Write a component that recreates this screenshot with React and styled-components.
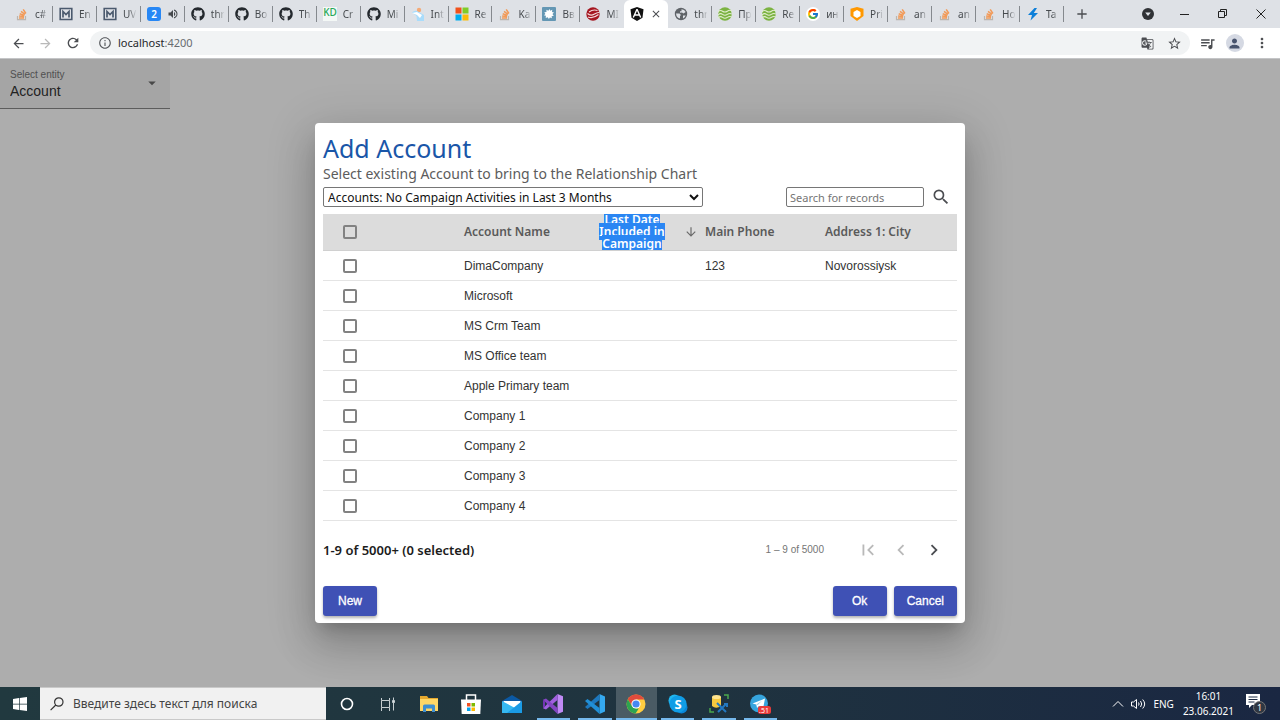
import { useState } from "react";
import styled, { createGlobalStyle, css } from "styled-components";
import { FaGithub } from "react-icons/fa";
import { FcGoogle } from "react-icons/fc";
import {
  MdAdd,
  MdArrowBack,
  MdArrowDownward,
  MdArrowDropDown,
  MdArrowForward,
  MdChevronLeft,
  MdChevronRight,
  MdClose,
  MdFirstPage,
  MdGTranslate,
  MdInfoOutline,
  MdMoreVert,
  MdPerson,
  MdQueueMusic,
  MdRefresh,
  MdSearch,
  MdStarBorder,
  MdVolumeUp,
} from "react-icons/md";

const companies = [
  { name: "DimaCompany", phone: "123", city: "Novorossiysk" },
  { name: "Microsoft" },
  { name: "MS Crm Team" },
  { name: "MS Office team" },
  { name: "Apple Primary team" },
  { name: "Company 1" },
  { name: "Company 2" },
  { name: "Company 3" },
  { name: "Company 4" },
];

const tabs = [
  { icon: <StackIcon />, title: "c#" },
  { icon: <MIcon />, title: "En" },
  { icon: <MIcon />, title: "UV" },
  { icon: <TwoIcon />, sound: true },
  { icon: <FaGithub color="#24292e" />, title: "thr" },
  { icon: <FaGithub color="#24292e" />, title: "Bo" },
  { icon: <FaGithub color="#24292e" />, title: "Th" },
  { icon: <KdIcon />, title: "Cr" },
  { icon: <FaGithub color="#24292e" />, title: "Mi" },
  { icon: <CloudIcon />, title: "Int" },
  { icon: <MicrosoftIcon />, title: "Re" },
  { icon: <StackIcon />, title: "Ka" },
  { icon: <SplashIcon />, title: "Вв" },
  { icon: <RedIcon />, title: "MI" },
  { icon: <AngularIcon />, active: true },
  { icon: <GlobeIcon />, title: "thr" },
  { icon: <WavesIcon />, title: "Пр" },
  { icon: <WavesIcon />, title: "Re" },
  { icon: <GoogleIcon />, title: "ин" },
  { icon: <ShieldIcon />, title: "Pri" },
  { icon: <StackIcon />, title: "an" },
  { icon: <StackIcon />, title: "an" },
  { icon: <StackIcon />, title: "Ho" },
  { icon: <BoltIcon />, title: "Ta" },
];

const apps = [
  { label: "Cortana", icon: <CortanaIcon /> },
  { label: "Task view", icon: <TaskViewIcon /> },
  { label: "Explorer", icon: <FolderIcon /> },
  { label: "Store", icon: <StoreIcon /> },
  { label: "Mail", icon: <MailIcon /> },
  { label: "Visual Studio", icon: <StudioIcon />, running: true },
  { label: "Code", icon: <CodeIcon />, running: true },
  { label: "Chrome", icon: <ChromeIcon />, running: true, focused: true },
  { label: "Skype", icon: <SkypeIcon />, running: true },
  { label: "SQL tools", icon: <DatabaseIcon />, running: true },
  { label: "Telegram", icon: <TelegramIcon />, running: true },
];

export default function App() {
  return (
    <>
      <GlobalStyle />
      <Screen>
        <TabBar />
        <AddressBar />
        <Page>
          <EntityField />
          <Backdrop>
            <AddAccountDialog />
          </Backdrop>
        </Page>
        <Taskbar />
      </Screen>
    </>
  );
}

function TabBar() {
  return (
    <TabStrip>
      <TabList>
        {tabs.map((tab, index) => (
          <Tab key={index} $active={tab.active} $divided={!tab.active && index !== 13}>
            {tab.icon}
            {tab.title && <TabTitle>{tab.title}</TabTitle>}
            {tab.sound && <MdVolumeUp size={12} />}
            {tab.active && (
              <IconButton aria-label="Close tab" $size={12}>
                <MdClose size={12} />
              </IconButton>
            )}
          </Tab>
        ))}
      </TabList>
      <IconButton aria-label="New tab" $size={36}>
        <MdAdd size={16} />
      </IconButton>
      <WindowButtons>
        <IconButton aria-label="Search tabs" $size={36}>
          <svg width="12" height="12" viewBox="0 0 12 12">
            <circle cx="6" cy="6" r="6" fill="#303236" />
            <path d="M3.2 4.5h5.6L6 8z" fill="#dee1e6" />
          </svg>
        </IconButton>
        <IconButton aria-label="Minimize" $size={38}>
          <svg width="10" height="10" viewBox="0 0 10 10">
            <path d="M0 5.5h9" stroke="#222" />
          </svg>
        </IconButton>
        <IconButton aria-label="Restore" $size={38}>
          <svg width="10" height="10" viewBox="0 0 10 10" fill="none" stroke="#222">
            <path d="M.5 2.5h6v6h-6zM2.5 2.5v-2h6v6h-2" />
          </svg>
        </IconButton>
        <IconButton aria-label="Close" $size={38}>
          <svg width="10" height="10" viewBox="0 0 10 10">
            <path d="M.5.5l9 9M9.5.5l-9 9" stroke="#222" />
          </svg>
        </IconButton>
      </WindowButtons>
    </TabStrip>
  );
}

function AddressBar() {
  return (
    <Toolbar>
      <IconButton aria-label="Back" $size={27}>
        <MdArrowBack size={15} />
      </IconButton>
      <IconButton aria-label="Forward" $size={27} $muted>
        <MdArrowForward size={15} />
      </IconButton>
      <IconButton aria-label="Reload" $size={27}>
        <MdRefresh size={16} />
      </IconButton>
      <Omnibox>
        <MdInfoOutline size={14} />
        <Address>
          localhost<span>:4200</span>
        </Address>
        <IconButton aria-label="Translate" $size={27}>
          <MdGTranslate size={13} />
        </IconButton>
        <IconButton aria-label="Bookmark" $size={27}>
          <MdStarBorder size={15} />
        </IconButton>
      </Omnibox>
      <IconButton aria-label="Media" $size={27}>
        <MdQueueMusic size={17} />
      </IconButton>
      <IconButton aria-label="Profile" $size={27}>
        <Avatar>
          <MdPerson size={15} />
        </Avatar>
      </IconButton>
      <IconButton aria-label="Menu" $size={27}>
        <MdMoreVert size={16} />
      </IconButton>
    </Toolbar>
  );
}

function EntityField() {
  return (
    <Field>
      <FieldText>
        <label htmlFor="entity">Select entity</label>
        <select id="entity" defaultValue="Account">
          <option>Account</option>
        </select>
      </FieldText>
      <MdArrowDropDown size={18} />
    </Field>
  );
}

function AddAccountDialog() {
  const [selected, setSelected] = useState([]);

  function toggle(name) {
    if (selected.includes(name)) setSelected(selected.filter((item) => item !== name));
    else setSelected([...selected, name]);
  }

  function toggleAll() {
    setSelected(selected.length === companies.length ? [] : companies.map((company) => company.name));
  }

  return (
    <Dialog role="dialog" aria-labelledby="dialog-title">
      <h1 id="dialog-title">Add Account</h1>
      <Subtitle>Select existing Account to bring to the Relationship Chart</Subtitle>
      <Filters>
        <ViewSelect aria-label="View" defaultValue="campaign">
          <option value="campaign">Accounts: No Campaign Activities in Last 3 Months</option>
        </ViewSelect>
        <SearchForm onSubmit={(event) => event.preventDefault()}>
          <SearchInput aria-label="Search for records" placeholder="Search for records" />
          <IconButton type="submit" aria-label="Search" $size={33}>
            <MdSearch size={20} />
          </IconButton>
        </SearchForm>
      </Filters>
      <Table>
        <colgroup>
          <col width="141" />
          <col width="120" />
          <col width="121" />
          <col width="120" />
          <col />
        </colgroup>
        <thead>
          <tr>
            <th>
              <Checkbox
                aria-label="Select all"
                checked={selected.length === companies.length}
                onChange={toggleAll}
              />
            </th>
            <th>Account Name</th>
            <th>
              <SortHeader>
                <SortLabel>
                  <mark>Last Date Included in Campaign</mark>
                </SortLabel>
                <MdArrowDownward size={14} />
              </SortHeader>
            </th>
            <th>Main Phone</th>
            <th>Address 1: City</th>
          </tr>
        </thead>
        <tbody>
          {companies.map((company) => (
            <tr key={company.name}>
              <td>
                <Checkbox
                  aria-label={company.name}
                  checked={selected.includes(company.name)}
                  onChange={() => toggle(company.name)}
                />
              </td>
              <td>{company.name}</td>
              <td />
              <td>{company.phone}</td>
              <td>{company.city}</td>
            </tr>
          ))}
        </tbody>
      </Table>
      <Paginator>
        <Summary>1-9 of 5000+ ({selected.length} selected)</Summary>
        <Range>1 – 9 of 5000</Range>
        <IconButton aria-label="First page" $size={33} $muted>
          <MdFirstPage size={22} />
        </IconButton>
        <IconButton aria-label="Previous page" $size={33} $muted>
          <MdChevronLeft size={22} />
        </IconButton>
        <IconButton aria-label="Next page" $size={33}>
          <MdChevronRight size={22} />
        </IconButton>
      </Paginator>
      <Actions>
        <ActionButton>New</ActionButton>
        <Spacer />
        <ActionButton>Ok</ActionButton>
        <ActionButton>Cancel</ActionButton>
      </Actions>
    </Dialog>
  );
}

function Taskbar() {
  return (
    <TaskbarContainer>
      <StartButton aria-label="Start">
        <svg width="14" height="14" viewBox="0 0 14 14" fill="#fff">
          <path d="M0 2l6-.9v5.6H0zM6.7 1L14 0v6.7H6.7zM0 7.4h6V13l-6-.9zM6.7 7.4H14V14l-7.3-1z" />
        </svg>
      </StartButton>
      <TaskSearch>
        <svg width="14" height="14" viewBox="0 0 14 14" fill="none" stroke="#333" strokeWidth="1.2">
          <circle cx="8.8" cy="5" r="4.2" />
          <path d="M5.8 8L.6 13.2" />
        </svg>
        <input aria-label="Поиск" placeholder="Введите здесь текст для поиска" />
      </TaskSearch>
      <AppList>
        {apps.map((app) => (
          <AppButton key={app.label} aria-label={app.label} $running={app.running} $focused={app.focused}>
            {app.icon}
          </AppButton>
        ))}
      </AppList>
      <Tray>
        <svg width="12" height="8" viewBox="0 0 12 8" fill="none" stroke="#fff">
          <path d="M1 6.5l5-5 5 5" />
        </svg>
        <svg width="15" height="12" viewBox="0 0 15 12" fill="none" stroke="#fff">
          <path d="M.5 4h2l3-2.5v9L2.5 8h-2zM7.5 4.5q1.2 1.5 0 3M9.5 3q2.5 3 0 6M11.7 1.5q4 4.5 0 9" />
        </svg>
        <span>ENG</span>
        <Clock>
          <time>16:01</time>
          <time>23.06.2021</time>
        </Clock>
        <Notifications aria-label="Notifications">
          <svg width="15" height="15" viewBox="0 0 15 15">
            <path d="M0 0h14v11H6l-3 3v-3H0z" fill="#fff" />
            <path d="M2.5 3h9M2.5 5.5h9M2.5 8h6" stroke="#1b2a43" />
          </svg>
          <span>1</span>
        </Notifications>
      </Tray>
    </TaskbarContainer>
  );
}

function StackIcon() {
  return (
    <svg viewBox="0 0 14 14" fill="none">
      <path d="M2.5 9v3.700h8V9" stroke="#bcb5ae" strokeWidth="1.2" />
      <path d="M4 11h5M4.100 9l5 .6M4.700 6.800l4.700 1.700M6 4.400l4 3M8.200 2.300l2.700 4.200" stroke="#f29a58" strokeWidth="1.500" />
    </svg>
  );
}

function MIcon() {
  return (
    <svg viewBox="0 0 14 14" fill="none" stroke="#4b5a6e">
      <path d="M1.2 1.5h11.6v11H1.2z" strokeWidth="1.6" />
      <path d="M4 10.5V4.5l3 3 3-3v6" strokeWidth="1.7" />
    </svg>
  );
}

function TwoIcon() {
  return (
    <svg viewBox="0 0 14 14">
      <rect width="14" height="14" rx="3" fill="#2787f5" />
      <text x="7" y="11" fill="#fff" fontFamily="Noto Sans, sans-serif" fontSize="10" fontWeight="600" textAnchor="middle">
        2
      </text>
    </svg>
  );
}

function KdIcon() {
  return (
    <svg viewBox="0 0 14 14">
      <path d="M0 0h14v14H0z" fill="#f4f8f6" />
      <text x="7" y="9" fill="#27a858" fontFamily="Noto Sans, sans-serif" fontSize="10" fontWeight="500" textAnchor="middle">
        KD
      </text>
    </svg>
  );
}

function CloudIcon() {
  return (
    <svg viewBox="0 0 14 14">
      <circle cx="8" cy="3" r="2.2" fill="#f4aa77" />
      <path d="M1 5.5q3-3 6-1l6 3.500v6H6l-.5-5z" fill="#a9dcfb" />
      <path d="M1 6l5-1 5 3-2 3-3-3z" fill="#fff" />
    </svg>
  );
}

function MicrosoftIcon() {
  return (
    <svg viewBox="0 0 14 14">
      <path d="M.5.5h6v6h-6z" fill="#f1511b" />
      <path d="M7.5.5h6v6h-6z" fill="#80cc28" />
      <path d="M.5 7.5h6v6h-6z" fill="#00adef" />
      <path d="M7.5 7.5h6v6h-6z" fill="#fbbc09" />
    </svg>
  );
}

function SplashIcon() {
  return (
    <svg viewBox="0 0 14 14">
      <rect width="14" height="14" rx="1" fill="#6497b4" />
      <path
        d="M7.500 2l.8 1.700 2-1-.3 2.200 2 .6-1.600 1.500 1.400 1.700-2.200.5.3 2.100-2-.8-1 1.500-1.200-1.700-2 .8.200-2.300-2-.6L3.400 7 2.300 5.200l2.200-.3L4.400 2.800l2 .9z"
        fill="#fff"
      />
    </svg>
  );
}

function RedIcon() {
  return (
    <svg viewBox="0 0 14 14">
      <circle cx="7" cy="7" r="6.700" fill="#a51620" />
      <path d="M3 5q4-3 8.500-1.500M1.500 6.500q3 3 7 .5t5-1M2 10q5 2 10.500-2.500" fill="none" stroke="#f3d9da" strokeWidth="1.100" />
    </svg>
  );
}

function AngularIcon() {
  return (
    <svg viewBox="0 0 14 14">
      <path d="M7 0l6.5 2.3-1 8.500L7 14l-5.500-3.200-1-8.500z" fill="#111" />
      <path d="M7 2.2L3.300 10.500M7 2.200l3.700 8.300M4.900 8h4.200" fill="none" stroke="#fff" strokeWidth="1.400" />
    </svg>
  );
}

function GlobeIcon() {
  return (
    <svg viewBox="0 0 14 14">
      <circle cx="7" cy="7" r="6.200" fill="#5f6368" />
      <path d="M2 6.500h3.500l1.500 1.500-1 1v2.500Q2.500 11 2 6.500zM7.500 2.200q3 .2 4.200 2.800L9.500 6.500 8 5.500l-2 .3V4.300h1.500zM9 8.500h2.700q-.7 2-2.700 3z" fill="#dee1e6" />
    </svg>
  );
}

function WavesIcon() {
  return (
    <svg viewBox="0 0 14 14">
      <circle cx="7" cy="7" r="6.800" fill="#7cb342" />
      <path
        d="M0 4.800q2.300-2.300 4.600-.6t4.700 0 4.700-.4M0 8q2.300-2.300 4.600-.6t4.700 0T14 7M0 11q2.300-2.300 4.600-.6t4.700 0 4.700-.4"
        fill="none"
        stroke="#e2eecf"
        strokeWidth="1.100"
      />
    </svg>
  );
}

function GoogleIcon() {
  return (
    <GoogleBadge>
      <FcGoogle size={12} />
    </GoogleBadge>
  );
}

function ShieldIcon() {
  return (
    <svg viewBox="0 0 14 14">
      <path d="M7 0l6.500 1.800v7.200L7 14 .5 9V1.800z" fill="#ff9800" />
      <path d="M7 3l3.500 1.900v4L7 11 3.500 8.900v-4z" fill="#fff" />
    </svg>
  );
}

function BoltIcon() {
  return (
    <svg viewBox="0 0 14 14">
      <path d="M8.500 1L2 8h4l-1.500 5.500L12 6H7.800L11 1z" fill="#0c7fd9" />
    </svg>
  );
}

function CortanaIcon() {
  return (
    <svg width="20" height="20" viewBox="0 0 20 20">
      <circle cx="10" cy="10" r="5.500" fill="none" stroke="#fff" strokeWidth="1.600" />
    </svg>
  );
}

function TaskViewIcon() {
  return (
    <svg width="20" height="20" viewBox="0 0 20 20" fill="none" stroke="#c5cdd0">
      <path d="M3.500 4v2.500h8V4M3.500 17v-3.500h8V17M3.500 6.500v7M11.500 6.500v7M15.500 3.500v13" />
      <path d="M14.500 6.500h2v2h-2z" fill="#d9dee0" />
    </svg>
  );
}

function FolderIcon() {
  return (
    <svg width="20" height="20" viewBox="0 0 20 20">
      <path d="M1 2h7l1.500 2H19v13H1z" fill="#e5a92e" />
      <path d="M1 5h18v12H1z" fill="#ffd766" />
      <path d="M4 18v-6q0-1.500 1.500-1.500h9q1.500 0 1.500 1.500v6h-3v-3.500H7V18z" fill="#3f8fd0" />
    </svg>
  );
}

function StoreIcon() {
  return (
    <svg width="20" height="20" viewBox="0 0 20 20">
      <path d="M5.500 6V1h9v5" fill="none" stroke="#fff" strokeWidth="1.500" />
      <path d="M0 5.500h20L19.300 20H.7z" fill="#fff" />
      <path d="M6 9h3.500v3.500H6z" fill="#f25022" />
      <path d="M10.500 9H14v3.500h-3.500z" fill="#7fba00" />
      <path d="M6 13.500h3.500V17H6z" fill="#00a4ef" />
      <path d="M10.500 13.500H14V17h-3.500z" fill="#ffb900" />
    </svg>
  );
}

function MailIcon() {
  return (
    <svg width="20" height="20" viewBox="0 0 20 20">
      <path d="M0 7l10-6 10 6v5H0z" fill="#0b59a4" />
      <path d="M1.500 7h17v9h-17z" fill="#fff" />
      <path d="M0 7l13 7-7 5H0z" fill="#35b8f1" />
      <path d="M20 7v12H5z" fill="#1a9be5" />
    </svg>
  );
}

function StudioIcon() {
  return (
    <svg width="20" height="20" viewBox="0 0 20 20">
      <path d="M14.500 0L20 2.300v15.400L14.500 20z" fill="#c08af5" />
      <path d="M14.500 0v6L3 15.500l-3-1.300z" fill="#a060df" />
      <path d="M0 5.800l3-1.300L14.500 14v6z" fill="#8445c4" />
      <path d="M0 5.800l2 1.500v5.400l-2 1.500z" fill="#7236b4" />
    </svg>
  );
}

function CodeIcon() {
  return (
    <svg width="20" height="20" viewBox="0 0 20 20">
      <path d="M14.500 0L20 2.500v15L14.500 20z" fill="#35a9ef" />
      <path d="M14.500 0v6L2.500 15 0 13z" fill="#1d78be" />
      <path d="M0 7l2.500-2 12 9v6z" fill="#218fd6" />
    </svg>
  );
}

function ChromeIcon() {
  return (
    <svg width="20" height="20" viewBox="0 0 20 20">
      <circle cx="10" cy="10" r="9.500" fill="#ffcd40" />
      <path d="M1.800 5.200A9.500 9.500 0 0 1 18.300 5.500H10L6 12.300z" fill="#e24b3c" />
      <path d="M1.800 5.200L6.100 12.300 10 14.500h2.800L9.500 19.500A9.500 9.500 0 0 1 1.800 5.200z" fill="#2da450" />
      <circle cx="10" cy="10" r="4.600" fill="#fff" />
      <circle cx="10" cy="10" r="3.600" fill="#4688f1" />
    </svg>
  );
}

function SkypeIcon() {
  return (
    <svg width="20" height="20" viewBox="0 0 20 20">
      <circle cx="6.500" cy="6.500" r="6" fill="#20b7ef" />
      <circle cx="13.500" cy="13.500" r="6" fill="#0a86d8" />
      <circle cx="10" cy="10" r="8.600" fill="#109de6" />
      <text x="10" y="15" fill="#fff" fontFamily="Noto Sans, sans-serif" fontSize="13" fontWeight="700" textAnchor="middle">
        S
      </text>
    </svg>
  );
}

function DatabaseIcon() {
  return (
    <svg width="20" height="20" viewBox="0 0 20 20">
      <path d="M3 3v9q4 3.500 9 0V3z" fill="#f7c83f" />
      <ellipse cx="7.500" cy="3" rx="4.500" ry="2" fill="#ffe48e" />
      <path d="M15 1h4v4M1 14v4h4" fill="none" stroke="#4ba84e" strokeWidth="1.500" />
      <path d="M8 9l9 9M17 10l-8 8M15 10h3v3" fill="none" stroke="#2378c0" strokeWidth="2" />
    </svg>
  );
}

function TelegramIcon() {
  return (
    <svg width="22" height="20" viewBox="0 0 22 20">
      <circle cx="10" cy="9.500" r="9" fill="#36a4dd" />
      <path d="M3.500 9.500L16 4.500 14 15l-4-3-2 2-.7-3.500z" fill="#fff" />
      <path d="M7.300 10.500L13 6.800 8.800 11z" fill="#9bcbe5" />
      <rect x="9" y="12" width="13" height="8" rx="2.500" fill="#e83b3b" />
      <text x="15" y="19" fill="#fff" fontFamily="Noto Sans, sans-serif" fontSize="7" textAnchor="middle">
        .51
      </text>
    </svg>
  );
}

const uiFont = css`
  font-family: "Noto Sans", "Open Sans", sans-serif;
`;

const GlobalStyle = createGlobalStyle`
  * {
    box-sizing: border-box;
  }

  body {
    margin: 0;
    ${uiFont}
  }

  button,
  input,
  select {
    margin: 0;
    font-family: inherit;
  }
`;

const Screen = styled.div`
  min-height: 100vh;
  display: flex;
  flex-direction: column;
`;

const IconButton = styled.button`
  width: ${({ $size }) => $size}px;
  height: 27px;
  padding: 0;
  border: 0;
  background: none;
  color: ${({ $muted }) => ($muted ? "#b9b9b9" : "#4b4d51")};

  flex-shrink: 0;
  display: flex;
  align-items: center;
  justify-content: center;
`;

const TabStrip = styled.header`
  height: 28px;
  padding-left: 9px;
  background: #dee1e6;

  display: flex;
  align-items: center;
`;

const TabList = styled.nav`
  height: 100%;
  flex: 0 1 1055px;
  display: flex;
`;

const Tab = styled.div`
  flex: 1;
  min-width: 0;
  padding-left: 6px;
  position: relative;
  color: #45494d;

  display: flex;
  align-items: center;
  gap: 6px;

  & > svg:first-child {
    width: 14px;
    height: 14px;
    flex-shrink: 0;
  }

  ${({ $active }) =>
    $active &&
    css`
      background: #fff;
      border-radius: 6px 6px 0 0;
    `}

  ${({ $divided }) =>
    $divided &&
    css`
      &::after {
        content: "";
        width: 1px;
        height: 16px;
        position: absolute;
        right: 0;
        top: 6px;
        background: #85898e;
      }
    `}
`;

const TabTitle = styled.span`
  width: 15px;
  font-size: 10px;
  line-height: 16px;
  white-space: nowrap;
  overflow: hidden;
  mask-image: linear-gradient(90deg, #000 40%, transparent 90%);
`;

const GoogleBadge = styled.span`
  width: 14px;
  height: 14px;
  border-radius: 50%;
  background: #fff;
  flex-shrink: 0;
  display: flex;
  align-items: center;
  justify-content: center;
`;

const WindowButtons = styled.div`
  margin-left: auto;
  height: 26px;
  display: flex;
  align-items: center;
`;

const Toolbar = styled.div`
  height: 31px;
  padding: 0 5px;
  background: #fff;
  border-bottom: 1px solid #c4c5c7;

  display: flex;
  align-items: center;
`;

const Omnibox = styled.div`
  height: 24px;
  margin: 0 4px;
  padding: 0 2px 0 8px;
  border-radius: 12px;
  background: #f1f3f4;
  color: #55585c;

  flex: 1;
  display: flex;
  align-items: center;
`;

const Address = styled.div`
  flex: 1;
  margin-left: 6px;
  font-size: 11px;
  line-height: 16px;
  color: #26282b;

  & > span {
    color: #686c70;
  }
`;

const Avatar = styled.span`
  width: 18px;
  height: 18px;
  border-radius: 50%;
  background: #d5d9e3;
  color: #47536d;

  display: flex;
  align-items: center;
  justify-content: center;
`;

const Page = styled.main`
  flex: 1;
  position: relative;
  background: #fff;
`;

const Field = styled.div`
  width: 170px;
  height: 50px;
  padding: 0 9px 2px 10px;
  background: #f3f3f3;
  border-bottom: 1px solid #8a8a8a;
  color: #6b6b6b;

  display: flex;
  align-items: center;
`;

const FieldText = styled.div`
  flex: 1;
  display: flex;
  flex-direction: column;
  font-family: "Liberation Sans", Arial, sans-serif;

  & > label {
    font-size: 10px;
    line-height: 16px;
    color: #777;
  }

  & > select {
    padding: 0;
    border: 0;
    background: none;
    appearance: none;
    font-size: 14px;
    line-height: 16px;
    color: #333;
  }
`;

const Backdrop = styled.div`
  position: absolute;
  inset: 0;
  padding: 16px;
  background: rgba(0, 0, 0, 0.32);

  display: flex;
  align-items: center;
  justify-content: center;
`;

const Dialog = styled.section`
  width: 100%;
  max-width: 650px;
  padding: 8px 8px 7px;
  border-radius: 4px;
  background: #fff;
  box-shadow: 0 11px 15px -7px rgba(0, 0, 0, 0.2), 0 24px 38px 3px rgba(0, 0, 0, 0.14),
    0 9px 46px 8px rgba(0, 0, 0, 0.12);

  & > h1 {
    margin: 0;
    font-size: 25px;
    font-weight: 400;
    line-height: 34px;
    color: #1a56a8;
  }
`;

const Subtitle = styled.p`
  margin: 0 0 4px;
  font-size: 14px;
  line-height: 18px;
  color: #5c5c5c;
`;

const Filters = styled.div`
  margin-bottom: 7px;
  display: flex;
  align-items: center;
  justify-content: space-between;
`;

const ViewSelect = styled.select`
  width: 60%;
  height: 20px;
  padding: 0;
  border: 1px solid #767676;
  border-radius: 2px;
  background: #fff;
  font-size: 12px;
  color: #111;
`;

const SearchForm = styled.form`
  height: 20px;
  display: flex;
  align-items: center;
`;

const SearchInput = styled.input`
  width: 138px;
  height: 20px;
  padding: 0 3px;
  border: 1px solid #767676;
  border-radius: 2px;
  font-size: 11px;

  &::placeholder {
    color: #757575;
  }
`;

const Table = styled.table`
  width: 100%;
  table-layout: fixed;
  border-collapse: separate;
  border-spacing: 0;

  th {
    height: 37px;
    padding: 0;
    background: #dcdcdc;
    border-bottom: 1px solid #d0d0d0;
    font-size: 12px;
    font-weight: 600;
    line-height: 12px;
    text-align: left;
    color: #5a5a5a;
  }

  td {
    height: 30px;
    padding: 0;
    border-bottom: 1px solid #e4e4e4;
    font: 400 12px/16px "Liberation Sans", Arial, sans-serif;
    color: #333;
  }

  th:first-child,
  td:first-child {
    padding-left: 20px;
  }
`;

const Checkbox = styled.input.attrs({ type: "checkbox" })`
  width: 14px;
  height: 14px;
  border: 2px solid #828282;
  border-radius: 2px;
  appearance: none;
  display: block;

  &:checked {
    background: #3f51b5;
    border-color: #3f51b5;
  }
`;

const SortHeader = styled.button`
  width: 100%;
  height: 36px;
  padding: 0 7px 0 12px;
  border: 0;
  background: none;
  color: #6a6a6a;

  display: flex;
  align-items: center;
  justify-content: space-between;
`;

const SortLabel = styled.span`
  width: 72px;
  height: 36px;
  overflow: hidden;
  font-size: 12px;
  font-weight: 600;
  line-height: 12px;
  text-align: center;

  & > mark {
    background: #2a86f3;
    color: #fff;
  }
`;

const Paginator = styled.div`
  height: 58px;
  padding-right: 7px;
  display: flex;
  align-items: center;
`;

const Summary = styled.strong`
  flex: 1;
  font-size: 13px;
  font-weight: 600;
  line-height: 16px;
  color: #1c1c1c;
`;

const Range = styled.span`
  margin-right: 27px;
  font: 400 10px/16px "Liberation Sans", Arial, sans-serif;
  color: #757575;
`;

const Actions = styled.div`
  margin-top: 7px;
  display: flex;
  gap: 7px;
`;

const Spacer = styled.div`
  flex: 1;
`;

const ActionButton = styled.button`
  min-width: 54px;
  height: 30px;
  padding: 0 13px;
  border: 0;
  border-radius: 3px;
  background: #3f51b5;
  box-shadow: 0 2px 3px rgba(0, 0, 0, 0.3);
  font: 500 12px/16px "Liberation Sans", Arial, sans-serif;
  color: #fff;
  -webkit-text-stroke: 0.3px #fff;
`;

const TaskbarContainer = styled.footer`
  height: 33px;
  background: linear-gradient(90deg, #21393f, #1f333f 55%, #1a2742);
  color: #fff;
  display: flex;
`;

const StartButton = styled.button`
  width: 40px;
  padding: 0;
  border: 0;
  background: none;
  display: flex;
  align-items: center;
  justify-content: center;
`;

const TaskSearch = styled.div`
  width: 286px;
  padding-left: 10px;
  border: 1px solid #c9c9c9;
  border-width: 1px 0;
  background: #f1f1f1;

  display: flex;
  align-items: center;
  gap: 9px;

  & > input {
    flex: 1;
    min-width: 0;
    padding: 0;
    border: 0;
    background: none;
    font-size: 12px;
  }

  & > input::placeholder {
    color: #444;
  }
`;

const AppList = styled.div`
  flex: 0 1 455px;
  display: flex;
`;

const AppButton = styled.button`
  flex: 1;
  min-width: 0;
  padding: 0;
  border: 0;
  background: ${({ $focused }) => ($focused ? "#4a5b64" : "none")};
  position: relative;

  display: flex;
  align-items: center;
  justify-content: center;

  &::after {
    content: "";
    height: 2px;
    position: absolute;
    bottom: 0;
    left: ${({ $focused }) => ($focused ? 0 : 4)}px;
    right: ${({ $focused }) => ($focused ? 0 : 4)}px;
    background: ${({ $running }) => ($running ? "#76b9ed" : "none")};
  }
`;

const Tray = styled.div`
  margin-left: auto;
  padding-right: 14px;
  font-size: 10px;
  line-height: 16px;

  display: flex;
  align-items: center;
  gap: 7px;
`;

const Clock = styled.div`
  margin: 0 5px 0 2px;
  line-height: 15px;
  text-align: center;
  display: flex;
  flex-direction: column;
`;

const Notifications = styled.button`
  width: 20px;
  height: 20px;
  padding: 0;
  border: 0;
  background: none;
  color: #fff;
  position: relative;
  display: flex;

  & > span {
    width: 13px;
    height: 13px;
    position: absolute;
    right: 0;
    bottom: 0;
    border: 1px solid #777;
    border-radius: 50%;
    background: #303742;
    font-size: 9px;
    line-height: 11px;
  }
`;
